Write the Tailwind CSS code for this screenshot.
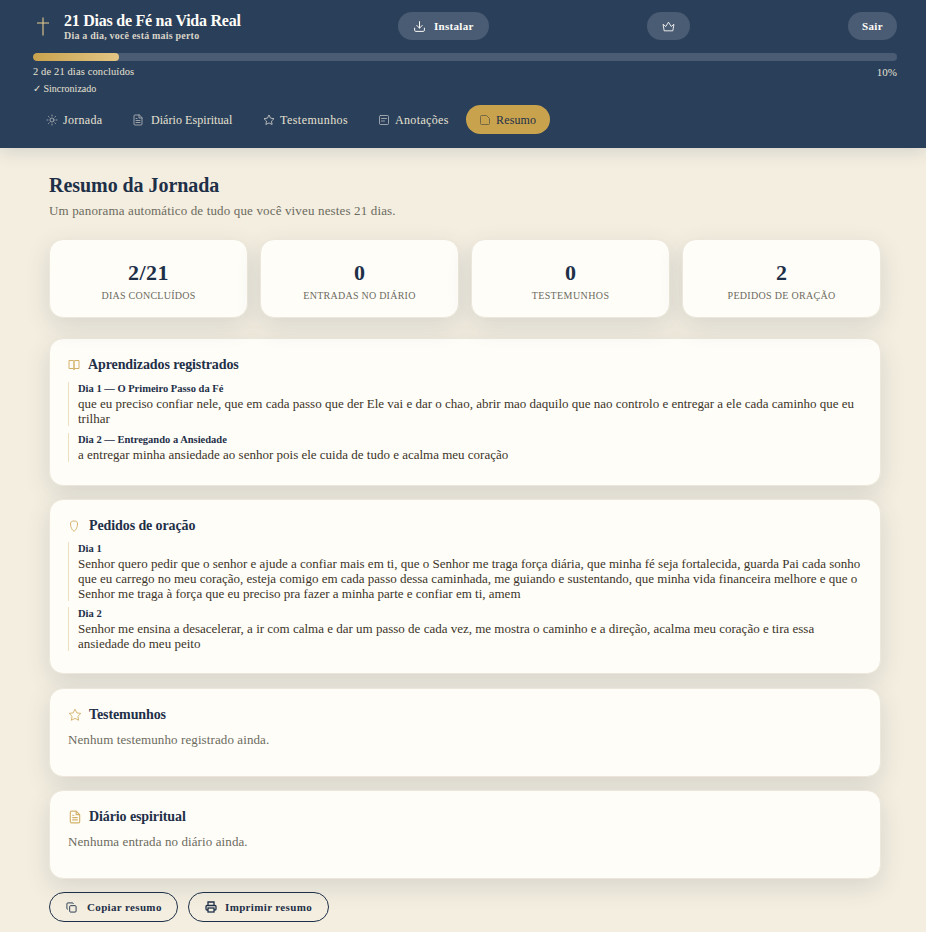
<!doctype html>
<html lang="pt-BR">
<head>
<meta charset="utf-8">
<title>Resumo</title>
<script src="https://cdn.jsdelivr.net/npm/@tailwindcss/browser@4"></script>
</head>
<body class="bg-[#f4eee0] font-['Liberation_Serif',serif] text-[#1e3048]">
<header class="h-[148px] bg-[#2a3f5a] pl-[33px] pr-[29px] pt-[12px] shadow-[0_4px_16px_rgba(42,63,90,0.15)] text-[#f5efe0]">
  <div class="flex h-[28px] items-center justify-between">
    <div class="flex items-center gap-[11px]">
      <svg class="w-[20px] h-[20px]" viewBox="0 0 20 20" fill="none" stroke="#e6cb8c" stroke-width="1.1"><path d="M10 1.500v18M4 7h12"/></svg>
      <div class="w-[176px] mt-[1px]">
        <div class="text-[16px] leading-[18px] font-bold text-[#fffdf8] whitespace-nowrap tracking-[-0.25px]">21 Dias de Fé na Vida Real</div>
        <div class="text-[10px] leading-[11px] font-bold text-[#d8d4c8] whitespace-nowrap tracking-[0.2px]">Dia a dia, você está mais perto</div>
      </div>
    </div>
    <button class="flex items-center gap-[8px] h-[28px] w-[91px] pl-[15px] rounded-full bg-[#4a5c74] text-[11px] font-bold text-[#fffdf8] tracking-[0.3px]">
      <svg class="w-[13px] h-[13px]" viewBox="0 0 24 24" fill="none" stroke="#fffdf8" stroke-width="1.8" stroke-linecap="round" stroke-linejoin="round"><path d="M21 15v4a2 2 0 0 1-2 2H5a2 2 0 0 1-2-2v-4M7 10l5 5 5-5M12 15V3"/></svg>
      Instalar
    </button>
    <button class="flex items-center justify-center h-[28px] w-[43px] rounded-full bg-[#4a5c74]">
      <svg class="w-[13px] h-[13px]" viewBox="0 0 24 24" fill="none" stroke="#fffdf8" stroke-width="1.6" stroke-linejoin="round"><path d="M2 8l5 4 5-8 5 8 5-4-2 12H4z"/></svg>
    </button>
    <button class="flex items-center justify-center h-[28px] w-[49px] rounded-full bg-[#4a5c74] text-[11px] font-bold text-[#fffdf8] tracking-[0.3px]">Sair</button>
  </div>
  <div class="mt-[13px] h-[8px] rounded-full bg-[#4a5c74] overflow-hidden">
    <div class="h-full w-[86px] rounded-full bg-linear-to-r from-[#c9a24d] to-[#e3c684]"></div>
  </div>
  <div class="mt-[4px] flex justify-between text-[10.5px] leading-[14px] text-[#e6e1d3]">
    <span class="tracking-[0.12px]">2 de 21 dias concluídos</span><span class="text-[11px]">10%</span>
  </div>
  <div class="mt-[3px] text-[10px] leading-[14px] text-[#e6e1d3]">✓ Sincronizado</div>
  <nav class="mt-[9px] flex h-[29px] items-center gap-[3px] text-[12px] text-[#e6e1d3]">
    <a class="flex items-center gap-[5px] h-full w-[83px] pl-[13px] tracking-[0.3px] pt-[1px]">
      <svg class="w-[12px] h-[12px]" viewBox="0 0 24 24" fill="none" stroke="#b9bbbd" stroke-width="1.6" stroke-linecap="round"><circle cx="12" cy="12" r="4"/><path d="M12 2v2M12 20v2M4.900 4.900l1.400 1.400M17.700 17.700l1.400 1.400M2 12h2M20 12h2M4.900 19.100l1.400-1.400M17.700 6.300l1.400-1.400"/></svg>
      Jornada
    </a>
    <a class="flex items-center gap-[7px] h-full w-[127px] pl-[13px] tracking-[0.06px] pt-[1px]">
      <svg class="w-[12px] h-[12px]" viewBox="0 0 24 24" fill="none" stroke="#b9bbbd" stroke-width="1.6" stroke-linecap="round" stroke-linejoin="round"><path d="M14 2H6a2 2 0 0 0-2 2v16a2 2 0 0 0 2 2h12a2 2 0 0 0 2-2V8zM14 2v6h6M8 13h8M8 17h8M8 9h2"/></svg>
      Diário Espiritual
    </a>
    <a class="flex items-center gap-[5px] h-full w-[113px] pl-[14px] tracking-[0.46px] pt-[1px]">
      <svg class="w-[12px] h-[12px]" viewBox="0 0 24 24" fill="none" stroke="#d8d6cf" stroke-width="1.6" stroke-linejoin="round"><path d="M12 2l3.100 6.300 6.900 1-5 4.900 1.200 6.800-6.200-3.200L5.800 21 7 14.200 2 9.300l6.900-1z"/></svg>
      Testemunhos
    </a>
    <a class="flex items-center gap-[5px] h-full w-[98px] pl-[13px] tracking-[0.35px] pt-[1px]">
      <svg class="w-[12px] h-[12px]" viewBox="0 0 24 24" fill="none" stroke="#b9bbbd" stroke-width="1.6" stroke-linecap="round"><rect x="3" y="3" width="18" height="18" rx="2"/><path d="M7 9h10M7 14h6"/></svg>
      Anotações
    </a>
    <a class="flex items-center gap-[5px] h-full w-[84px] pl-[13px] rounded-full bg-[#c9a24d] text-[#1e3048] tracking-[0.15px] pt-[1px]">
      <svg class="w-[12px] h-[12px]" viewBox="0 0 24 24" fill="none" stroke="#6b6244" stroke-width="1.8" stroke-linejoin="round"><path d="M15 3H5a2 2 0 0 0-2 2v14a2 2 0 0 0 2 2h14a2 2 0 0 0 2-2V9z"/></svg>
      Resumo
    </a>
  </nav>
</header>
<main class="pl-[49px] pr-[45px] pt-[24px]">
  <h1 class="text-[20px] leading-[26px] font-bold tracking-[-0.05px]">Resumo da Jornada</h1>
  <p class="mt-[5px] text-[13px] leading-[16px] text-[#6b6b5e] tracking-[0.15px]">Um panorama automático de tudo que você viveu nestes 21 dias.</p>
  <div class="mt-[20px] grid grid-cols-4 gap-[12px]">
    <div class="h-[79px] rounded-[14px] border border-[#ece7da] bg-[#fffdf8] shadow-[0_8px_24px_rgba(42,63,90,0.14)] flex flex-col items-center pt-[21px]">
      <div class="text-[22px] leading-[24px] font-bold tracking-[0.5px]">2/21</div>
      <div class="mt-[4px] text-[10px] leading-[14px] text-[#6b6b5e] tracking-[0.25px]">DIAS CONCLUÍDOS</div>
    </div>
    <div class="h-[79px] rounded-[14px] border border-[#ece7da] bg-[#fffdf8] shadow-[0_8px_24px_rgba(42,63,90,0.14)] flex flex-col items-center pt-[21px]">
      <div class="text-[22px] leading-[24px] font-bold">0</div>
      <div class="mt-[4px] text-[10px] leading-[14px] text-[#6b6b5e] tracking-[0.25px]">ENTRADAS NO DIÁRIO</div>
    </div>
    <div class="h-[79px] rounded-[14px] border border-[#ece7da] bg-[#fffdf8] shadow-[0_8px_24px_rgba(42,63,90,0.14)] flex flex-col items-center pt-[21px]">
      <div class="text-[22px] leading-[24px] font-bold">0</div>
      <div class="mt-[4px] text-[10px] leading-[14px] text-[#6b6b5e] tracking-[0.4px]">TESTEMUNHOS</div>
    </div>
    <div class="h-[79px] rounded-[14px] border border-[#ece7da] bg-[#fffdf8] shadow-[0_8px_24px_rgba(42,63,90,0.14)] flex flex-col items-center pt-[21px]">
      <div class="text-[22px] leading-[24px] font-bold">2</div>
      <div class="mt-[4px] text-[10px] leading-[14px] text-[#6b6b5e] tracking-[0.3px]">PEDIDOS DE ORAÇÃO</div>
    </div>
  </div>

  <section class="mt-[20px] h-[148px] rounded-[14px] border border-[#ece7da] bg-[#fffdf8] shadow-[0_8px_24px_rgba(42,63,90,0.14)] px-[18px] pt-[15px]">
    <h2 class="flex items-center gap-[8px] text-[14px] leading-[20px] font-bold tracking-[-0.1px] pt-[1px]">
      <svg class="w-[12px] h-[12px]" viewBox="0 0 24 24" fill="none" stroke="#d4b26a" stroke-width="2" stroke-linejoin="round"><path d="M2 3h8a2 2 0 0 1 2 2v16a2 2 0 0 0-2-2H2zM22 3h-8a2 2 0 0 0-2 2v16a2 2 0 0 1 2-2h8z"/></svg>
      Aprendizados registrados
    </h2>
    <div class="mt-[7px] border-l border-[#efe0bd] pl-[9px]">
      <div class="text-[10.5px] leading-[14px] font-bold">Dia 1 — O Primeiro Passo da Fé</div>
      <p class="text-[13px] leading-[15px] text-[#3b3428]">que eu preciso confiar nele, que em cada passo que der Ele vai e dar o chao, abrir mao daquilo que nao controlo e entregar a ele cada caminho que eu trilhar</p>
    </div>
    <div class="mt-[7px] border-l border-[#efe0bd] pl-[9px]">
      <div class="text-[10.5px] leading-[14px] font-bold">Dia 2 — Entregando a Ansiedade</div>
      <p class="text-[13px] leading-[15px] text-[#3b3428]">a entregar minha ansiedade ao senhor pois ele cuida de tudo e acalma meu coração</p>
    </div>
  </section>

  <section class="mt-[13px] h-[175px] rounded-[14px] border border-[#ece7da] bg-[#fffdf8] shadow-[0_8px_24px_rgba(42,63,90,0.14)] px-[18px] pt-[15px]">
    <h2 class="flex items-center gap-[9px] text-[14px] leading-[20px] font-bold tracking-[-0.1px] pt-[1px]">
      <svg class="w-[12px] h-[12px]" viewBox="0 0 24 24" fill="none" stroke="#d4b26a" stroke-width="2" stroke-linejoin="round"><path d="M12 2c5 0 7 2 7 6 0 6-4 14-7 14S5 14 5 8c0-4 2-6 7-6z"/></svg>
      Pedidos de oração
    </h2>
    <div class="mt-[6px] border-l border-[#efe0bd] pl-[9px]">
      <div class="text-[10.5px] leading-[14px] font-bold">Dia 1</div>
      <p class="text-[13px] leading-[15px] text-[#3b3428]">Senhor quero pedir que o senhor e ajude a confiar mais em ti, que o Senhor me traga força diária, que minha fé seja fortalecida, guarda Pai cada sonho que eu carrego no meu coração, esteja comigo em cada passo dessa caminhada, me guiando e sustentando, que minha vida financeira melhore e que o Senhor me traga à força que eu preciso pra fazer a minha parte e confiar em ti, amem</p>
    </div>
    <div class="mt-[6px] border-l border-[#efe0bd] pl-[9px]">
      <div class="text-[10.5px] leading-[14px] font-bold">Dia 2</div>
      <p class="text-[13px] leading-[15px] text-[#3b3428]">Senhor me ensina a desacelerar, a ir com calma e dar um passo de cada vez, me mostra o caminho e a direção, acalma meu coração e tira essa ansiedade do meu peito</p>
    </div>
  </section>

  <section class="mt-[14px] h-[89px] rounded-[14px] border border-[#ece7da] bg-[#fffdf8] shadow-[0_8px_24px_rgba(42,63,90,0.14)] px-[18px] pt-[15px]">
    <h2 class="flex items-center gap-[7px] text-[14px] leading-[20px] font-bold tracking-[-0.1px] pt-[1px]">
      <svg class="w-[14px] h-[14px]" viewBox="0 0 24 24" fill="none" stroke="#d4b26a" stroke-width="1.6" stroke-linejoin="round"><path d="M12 2l3.100 6.300 6.900 1-5 4.900 1.200 6.800-6.200-3.200L5.800 21 7 14.200 2 9.300l6.900-1z"/></svg>
      Testemunhos
    </h2>
    <p class="mt-[7px] text-[13px] leading-[16px] text-[#6b6b5e] tracking-[0.1px]">Nenhum testemunho registrado ainda.</p>
  </section>

  <section class="mt-[13px] h-[89px] rounded-[14px] border border-[#ece7da] bg-[#fffdf8] shadow-[0_8px_24px_rgba(42,63,90,0.14)] px-[18px] pt-[15px]">
    <h2 class="flex items-center gap-[7px] text-[14px] leading-[20px] font-bold tracking-[-0.1px] pt-[1px]">
      <svg class="w-[14px] h-[14px]" viewBox="0 0 24 24" fill="none" stroke="#d4b26a" stroke-width="2" stroke-linecap="round" stroke-linejoin="round"><path d="M14 2H6a2 2 0 0 0-2 2v16a2 2 0 0 0 2 2h12a2 2 0 0 0 2-2V8zM14 2v6h6M8 13h8M8 17h8M8 9h2"/></svg>
      Diário espiritual
    </h2>
    <p class="mt-[7px] text-[13px] leading-[16px] text-[#6b6b5e] tracking-[0.1px]">Nenhuma entrada no diário ainda.</p>
  </section>

  <div class="mt-[13px] flex gap-[10px]">
    <button class="flex items-center gap-[10px] h-[30px] w-[129px] pl-[16px] rounded-full border border-[#1e3048] text-[11px] font-bold tracking-[0.35px]">
      <svg class="w-[11px] h-[11px]" viewBox="0 0 24 24" fill="none" stroke="#1e3048" stroke-width="2"><rect x="8" y="8" width="14" height="14" rx="2"/><path d="M4 16a2 2 0 0 1-2-2V4a2 2 0 0 1 2-2h10a2 2 0 0 1 2 2"/></svg>
      Copiar resumo
    </button>
    <button class="flex items-center gap-[8px] h-[30px] w-[141px] pl-[16px] rounded-full border border-[#1e3048] text-[11px] font-bold tracking-[0.35px]">
      <svg class="w-[12px] h-[12px]" viewBox="0 0 24 24" fill="none" stroke="#1e3048" stroke-width="2.600"><path d="M6 9V2h12v7M6 18H4a2 2 0 0 1-2-2v-5a2 2 0 0 1 2-2h16a2 2 0 0 1 2 2v5a2 2 0 0 1-2 2h-2"/><rect x="6" y="14" width="12" height="8"/></svg>
      Imprimir resumo
    </button>
  </div>
</main>
</body>
</html>
